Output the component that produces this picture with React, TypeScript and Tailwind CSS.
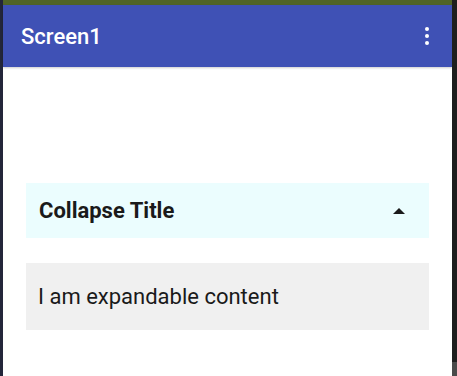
import { useState } from 'react';

export default function App() {
  const [open, setOpen] = useState(true);

  return (
    <div
      className="flex h-[376px] w-[457px] overflow-hidden bg-white"
      style={{ fontFamily: 'Roboto, "Noto Sans", sans-serif' }}
    >
      <div className="w-[3px] shrink-0 bg-[#23263a]" />
      <div className="flex flex-1 flex-col">
        <div className="h-[5px] bg-[#506427]" />
        <header className="flex h-[62px] items-center justify-between bg-[#3f51b5] pl-[18px] pr-[23px] shadow-[0_1px_2px_rgba(0,0,0,0.2)]">
          <h1 className="text-[22px] font-medium text-white">Screen1</h1>
          <button className="flex flex-col items-center gap-[3px]">
            <span className="h-[4px] w-[4px] rounded-full bg-white" />
            <span className="h-[4px] w-[4px] rounded-full bg-white" />
            <span className="h-[4px] w-[4px] rounded-full bg-white" />
          </button>
        </header>

        <div className="flex flex-col px-[23px] pt-[116px]">
          <button
            onClick={() => setOpen(!open)}
            className="flex h-[55px] items-center justify-between bg-[#ebfdfe] pl-[13px] pr-[24px] text-left"
          >
            <span className="text-[22px] font-bold text-[#1a1a1a]">Collapse Title</span>
            <svg width="12" height="6" viewBox="0 0 12 6">
              {open ? <path d="M0 6 L6 0 L12 6 Z" fill="#1a1a1a" /> : <path d="M0 0 L6 6 L12 0 Z" fill="#1a1a1a" />}
            </svg>
          </button>
          {open && (
            <div className="mt-[25px] flex h-[67px] items-center bg-[#f0f0f0] pl-[12px]">
              <p className="text-[22px] text-[#1a1a1a]">I am expandable content</p>
            </div>
          )}
        </div>
      </div>
      <div className="flex w-[5px] shrink-0 flex-col justify-end bg-[#1e1e1e]">
        <div className="h-[14px] bg-[#4a4a4a]" />
      </div>
    </div>
  );
}
